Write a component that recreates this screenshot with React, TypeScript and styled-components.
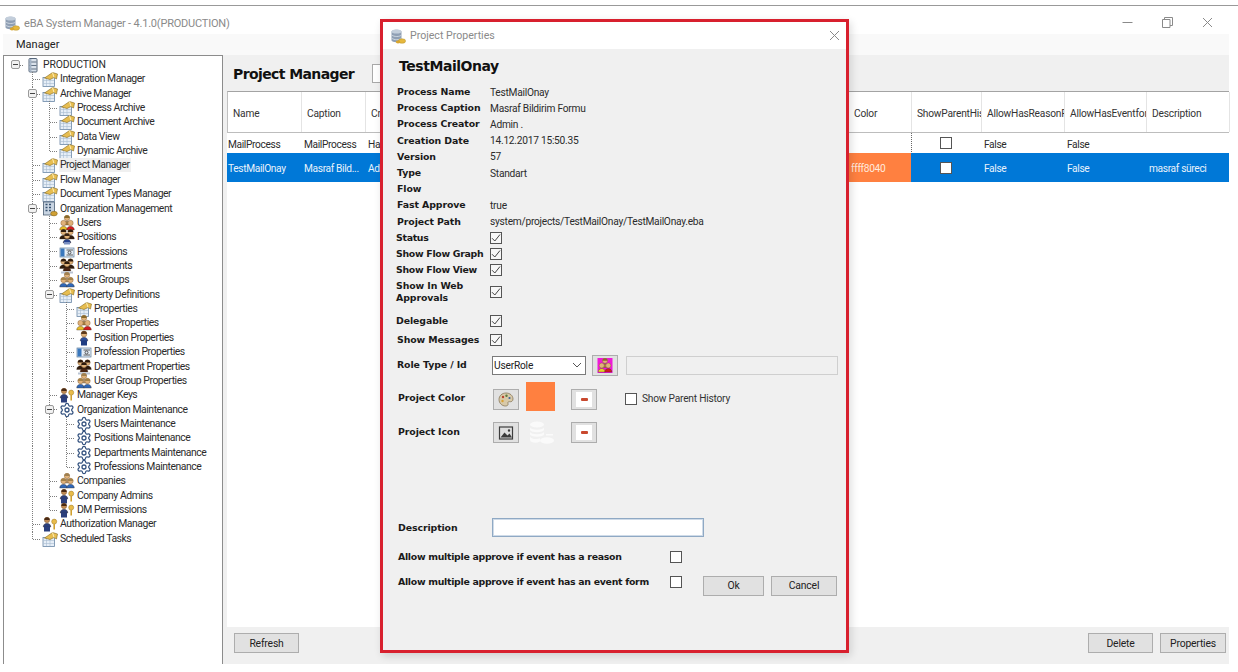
import React from "react";
import styled, { createGlobalStyle, css } from "styled-components";
import { Settings } from "lucide-react";

const Global = createGlobalStyle`
  html, body { margin: 0; padding: 0; background: #fff; }
  body { font-family: "Roboto", "Liberation Sans", sans-serif; font-size: 11px; color: #1c1c1c; -webkit-font-smoothing: antialiased; }
  * { box-sizing: border-box; }
`;

const Page = styled.div`
  position: relative; width: 1238px; height: 672px; padding-top: 5px; overflow: hidden;
  display: flex; flex-direction: column; background: #fff;
`;
const TopRule = styled.div`height: 1px; background: #999; flex: none;`;
const TitleBar = styled.div`
  height: 28px; flex: none; display: flex; align-items: center; padding: 6px 25px 0 4px; color: #8a8a8a; font-size: 11px; letter-spacing: -.2px;
`;
const TitleText = styled.span`margin-left: 4px; flex: 1;`;
const WinControls = styled.div`display: flex; gap: 29px; align-items: center; margin-top: -2px;`;
const MenuBar = styled.div`
  height: 21px; flex: none; margin: 0 9px 0 3px; background: #f9f9f9; padding: 0 0 1px 13px; display: flex; align-items: center; font-size: 11px; color: #222;
`;
const Body = styled.div`height: 609px; flex: none; display: flex; margin-right: 9px; margin-left: 3px;`;
const TreePanel = styled.div`
  width: 220px; flex: none; border: 1px solid #8c8c8c; border-bottom: none; padding: 1.8px 0 0 3px; background: #fff;
`;
const TreeRowBox = styled.div`height: 14.36px; display: flex; align-items: center; white-space: nowrap;`;
const lineV = (h: string) => `repeating-linear-gradient(to bottom, #7e7e7e 0 1px, transparent 1px 2px) 8px 0 / 1px ${h} no-repeat`;
const lineH = `repeating-linear-gradient(to right, #7e7e7e 0 1px, transparent 1px 2px) 9px 7px / 8px 1px no-repeat`;
const Guide = styled.div<{ $kind: "none" | "pipe" | "tee" | "elbow" | "stub" }>`
  width: 17px; height: 100%; flex: none; display: flex; align-items: center; justify-content: center;
  ${p => p.$kind === "pipe" && css`background: ${lineV("100%")};`}
  ${p => p.$kind === "tee" && css`background: ${lineH}, ${lineV("100%")};`}
  ${p => p.$kind === "elbow" && css`background: ${lineH}, ${lineV("50%")};`}
  ${p => p.$kind === "stub" && css`background: ${lineH};`}
`;
const Expander = styled.div`
  width: 9px; height: 9px; border: 1px solid #9a9a9a; border-radius: 2px; background: #f1f1f1; display: flex; align-items: center; justify-content: center;
  &::before { content: ""; width: 5px; height: 1px; background: #444; }
`;
const NodeIcon = styled.span`width: 16px; height: 14px; margin: 0 2px 0 1px; flex: none; display: flex; align-items: center; justify-content: center;`;
const NodeLabel = styled.span<{ $active?: boolean; $caps?: boolean }>`
  font-size: 10.4px; line-height: 14px; color: #2b2b2b; margin-left: -1px; padding: 0 1px; letter-spacing: ${p => (p.$caps ? "-.1px" : "-.45px")};
  ${p => p.$active && css`background: #f0f0f0;`}
`;
const Main = styled.div`flex: 1; min-width: 0; display: flex; flex-direction: column; background: #f0f0f0;`;
const MainHead = styled.div`height: 36px; flex: none; display: flex; align-items: center; padding-left: 10px; padding-top: 1px;`;
const Heading = styled.h1`
  margin: 0; width: 139px; font: bold 14px "DejaVu Sans", sans-serif; color: #111; letter-spacing: -.6px;
`;
const SearchBox = styled.div`width: 300px; height: 19px; background: #fff; border: 1px solid #a9a9a9;`;
const TableWrap = styled.div`flex: 1; margin-left: 4px; background: #fff; min-height: 0;`;
const cols = "74px 64px 483px 63px 70px 83px 82px 83px";
const HeaderRow = styled.div`
  height: 42px; display: grid; grid-template-columns: ${cols}; border-top: 1px solid #a3a3a3; border-bottom: 1px solid #bdbdbd; border-left: 1px solid #c0c0c0; background: #fff;
`;
const HeaderCell = styled.div`
  display: flex; align-items: center; padding: 2px 0 0 5px; border-right: 1px solid #e4e4e4; overflow: hidden; white-space: nowrap; font-size: 10.2px; letter-spacing: -.2px; color: #333;
`;
const DataRow = styled.div<{ $selected?: boolean; $h: number }>`
  height: ${p => p.$h}px; display: grid; grid-template-columns: ${cols};
  background: ${p => (p.$selected ? "#0078d7" : "#fff")}; color: ${p => (p.$selected ? "#e8f2fb" : "#2b2b2b")};
`;
const DataCell = styled.div<{ $fill?: string; $dotted?: boolean; $center?: boolean; $pad?: number }>`
  display: flex; align-items: center; padding: 2px 0 0 ${p => p.$pad ?? 3}px; overflow: hidden; white-space: nowrap; font-size: 10.2px; letter-spacing: -.35px;
  ${p => p.$center && css`justify-content: center; padding: 0;`}
  ${p => p.$fill && css`background: ${p.$fill}; color: #ffe9dc;`}
  ${p => p.$dotted && css`
    background: repeating-linear-gradient(to bottom, #666 0 1px, transparent 1px 2px) 0 0 / 1px 100% no-repeat;
  `}
`;
const Footer = styled.div`height: 37px; flex: none; display: flex; align-items: flex-start; padding: 6px 3px 0 11px; gap: 7px;`;
const Spacer = styled.div`flex: 1;`;
const ActionButton = styled.button<{ $w: number }>`
  width: ${p => p.$w}px; height: 20px; padding: 0; background: #e1e1e1; border: 1px solid #adadad; font: 10.4px "Roboto", sans-serif; letter-spacing: -.2px; color: #222; flex: none;
`;

const Dialog = styled.div`
  position: absolute; left: 380px; top: 19px; width: 469px; height: 634px; border: 3px solid #d8202e; background: #f0f0f0;
  box-shadow: 2px 3px 8px rgba(0,0,0,.14); display: flex; flex-direction: column;
`;
const DialogBar = styled.div`
  height: 27px; flex: none; background: #fff; display: flex; align-items: center; padding: 0 6px 0 7px; color: #8a8a8a; font-size: 10.6px;
`;
const DialogTitle = styled.span`flex: 1; margin-left: 4px;`;
const DialogBody = styled.div`padding: 7px 0 0 14px; display: flex; flex-direction: column;`;
const DialogHeading = styled.h2`
  margin: 0 0 0 2px; height: 28px; font: bold 14px/20px "DejaVu Sans", sans-serif; letter-spacing: -.45px; color: #111;
`;
const Row = styled.div<{ $h: number; $mt?: number; $start?: boolean }>`
  height: ${p => p.$h}px; margin-top: ${p => p.$mt ?? 0}px; flex: none; display: flex; align-items: ${p => (p.$start ? "flex-start" : "center")};
`;
const Label = styled.div<{ $inset?: number; $w?: number; $tight?: boolean; $top?: number }>`
  width: ${p => p.$w ?? 93}px; flex: none; padding-left: ${p => Math.max(0, p.$inset ?? 0)}px; margin-left: ${p => Math.min(0, p.$inset ?? 0)}px;
  margin-top: ${p => p.$top ?? 0}px;
  font: bold 9.4px/12px "DejaVu Sans", sans-serif; color: #1a1a1a; letter-spacing: ${p => (p.$tight ? "-.3px" : "-.1px")};
`;
const Value = styled.div`font-size: 10.2px; color: #2b2b2b; white-space: nowrap; letter-spacing: -.25px;`;
const Check = styled.div<{ $filled?: boolean; $ml?: number; $top?: number }>`
  width: 12px; height: 12px; flex: none; border: 1px solid #555; background: ${p => (p.$filled ? "#f7f7f7" : "#fff")};
  margin-left: ${p => p.$ml ?? 0}px; margin-top: ${p => p.$top ?? 0}px; display: flex; align-items: center; justify-content: center;
`;
const Select = styled.div`
  width: 94px; height: 19px; margin-left: 2px; border: 1px solid #7a7a7a; background: #fff; display: flex; align-items: center; justify-content: space-between; padding: 0 3px 0 1px; font-size: 10.2px; letter-spacing: -.2px; color: #222;
`;
const IconButton = styled.div<{ $ml?: number; $top?: number }>`
  width: 26px; height: 21px; margin-left: ${p => p.$ml ?? 0}px; margin-top: ${p => p.$top ?? 0}px; flex: none; background: #e1e1e1; border: 1px solid #adadad; display: flex; align-items: center; justify-content: center;
`;
const DisabledField = styled.div`width: 212px; height: 19px; margin-left: 8px; background: #f0f0f0; border: 1px solid #cfcfcf;`;
const Swatch = styled.div`width: 29px; height: 29px; margin-left: 7px; background: #ff8040; flex: none;`;
const IconSlot = styled.div`width: 29px; height: 21px; margin-left: 7px; flex: none; display: flex; align-items: center; justify-content: center;`;
const MinusFace = styled.div`
  width: 16px; height: 15px; background: #fff; display: flex; align-items: center; justify-content: center;
  &::before { content: ""; width: 7px; height: 3px; background: #c9492f; border-radius: 1px; }
`;
const InlineLabel = styled.span`margin: 10.6px 0 0 5px; font-size: 10.2px; line-height: 12px; letter-spacing: -.22px; color: #333;`;
const TextField = styled.div`width: 212px; height: 19px; margin-left: 2px; background: #fff; border: 1px solid #8fa9c4; box-shadow: inset 0 0 0 1px #cfdbe8;`;
const Grow = styled.div`flex: none; display: flex; gap: 7px; margin-left: 21px;`;

/* ---------- drawings ---------- */
const Svg: React.FC<{ children: React.ReactNode; s?: number }> = ({ children, s = 16 }) => (
  <svg width={s} height={s} viewBox="0 0 16 16" aria-hidden="true">{children}</svg>
);
const Roof = () => (
  <Svg>
    <rect x="1" y="6.500" width="11.500" height="9" fill="#e6eef7" stroke="#6a87a6" strokeWidth=".8" />
    <path d="M1.500 9.500h10.500M1.500 12.500h10.500M4.500 7v8M8 7v8" stroke="#a8bcd0" strokeWidth=".6" />
    <path d="M2.500 7 10.500 1.500 15.500 3 14.500 8 12 6.500 8 8.500z" fill="#e7bd50" stroke="#85691f" strokeWidth=".6" />
    <path d="M10.500 1.500 12 6.500" stroke="#fff4c6" strokeWidth=".9" />
  </Svg>
);
const Person = ({ x, y, body, head = "#e0b27a", r = 2.7, hair }: { x: number; y: number; body: string; head?: string; r?: number; hair?: string }) => (
  <g>
    <path d={`M${x - 3.8} ${y + 8} C${x - 3.8} ${y + 3} ${x + 3.8} ${y + 3} ${x + 3.8} ${y + 8}Z`} fill={body} stroke="#3a2a18" strokeWidth=".35" />
    <circle cx={x} cy={y + 1} r={r} fill={head} stroke="#7a5228" strokeWidth=".4" />
    {hair && <path d={`M${x - r} ${y + 1}a${r} ${r} 0 0 1 ${2 * r} 0z`} fill={hair} />}
  </g>
);
const Users = () => (
  <Svg>
    <Person x={8} y={2} body="#a9823f" hair="#8a6a2a" />
    <Person x={4.500} y={7} body="#e6bb2a" />
    <Person x={11.500} y={7} body="#d01c20" />
  </Svg>
);
const Groups = () => (
  <Svg>
    <Person x={8} y={2} body="#b99a70" hair="#a08050" />
    <Person x={4.500} y={7} body="#2f67b8" hair="#a58248" />
    <Person x={11.500} y={7} body="#2f67b8" hair="#a58248" />
  </Svg>
);
const Depts = () => (
  <Svg>
    <Person x={4.500} y={2.500} body="#2e1a0d" hair="#2e1a0d" />
    <Person x={11.500} y={2.500} body="#2e1a0d" hair="#2e1a0d" />
    <Person x={8} y={5} body="#4a2413" hair="#2e1a0d" />
    <rect x="2" y="13.500" width="12" height="2" fill="#b9c4d4" />
  </Svg>
);
const Positions = () => (
  <Svg>
    <Person x={4.500} y={2} body="#2e1a0d" hair="#2e1a0d" />
    <Person x={11.500} y={2} body="#2e1a0d" hair="#2e1a0d" />
    <Person x={8} y={6} body="#24408e" hair="#3a2212" />
    <rect x="5" y="13" width="6" height="2.500" fill="#7a8fc0" />
  </Svg>
);
const SinglePerson = () => (
  <Svg><Person x={8} y={3} body="#2b4e9c" r={2.900} hair="#5c3a1c" /><rect x="5" y="10.500" width="6" height="5" fill="#1f3d82" /></Svg>
);
const IdCard = () => (
  <Svg>
    <rect x="1" y="4" width="14" height="9" fill="#e4edf6" stroke="#5d7b99" strokeWidth=".7" />
    <rect x="1.500" y="4.500" width="4" height="8" fill="#3a78bd" />
    <path d="M7.500 6h6.500M7.500 11h6.500" stroke="#3a3a3a" strokeWidth=".8" />
    <circle cx="10.500" cy="8.500" r="1.500" fill="none" stroke="#333" strokeWidth=".8" />
  </Svg>
);
const KeyPerson = () => (
  <Svg>
    <Person x={5} y={3} body="#2b3f7c" head="#c08a52" r={2.700} hair="#4a2a14" />
    <rect x="2" y="10.500" width="6" height="5" fill="#2b3f7c" />
    <circle cx="12.200" cy="5.600" r="2.500" fill="#e9bc4a" stroke="#9a7420" strokeWidth=".5" />
    <path d="M12.200 8v5.500" stroke="#d0a030" strokeWidth="1.600" />
  </Svg>
);
const Gear = () => <Settings size={16} color="#34527f" strokeWidth={1.9} />;
const Server = () => (
  <Svg>
    <rect x="4" y="1.500" width="8" height="13.500" rx="1" fill="#d9e1ea" stroke="#56667a" />
    <path d="M4.500 5h7M4.500 8.500h7M4.500 12h7" stroke="#56667a" strokeWidth=".9" />
    <rect x="4.600" y="2" width="1.800" height="12.500" fill="#a5b5c7" />
  </Svg>
);
const Building = () => (
  <Svg>
    <rect x="1.500" y="1" width="11" height="13" fill="#c8d4e2" stroke="#4d5f74" strokeWidth=".8" />
    <path d="M3.500 3.500h2M7 3.500h2M3.500 6.500h2M7 6.500h2M3.500 9.500h2M7 9.500h2" stroke="#34506f" strokeWidth="1.400" />
    <ellipse cx="12" cy="12.600" rx="3.300" ry="2.300" fill="#cfa035" stroke="#7b5d18" strokeWidth=".5" />
  </Svg>
);
const AppLogo = () => (
  <Svg>
    <path d="M1.500 3.500C3 1 10 1 11.500 3.500V12C10 14.500 3 15 1.500 12.500z" fill="#8f9fb4" />
    <ellipse cx="6.500" cy="3.500" rx="5" ry="2" fill="#c3cedb" />
    <path d="M1.800 7c2 2 8 2 9.500 0M1.800 10.200c2 2 8 2 9.500 0" stroke="#dbe2ea" strokeWidth=".8" fill="none" />
    <ellipse cx="12" cy="13" rx="3.600" ry="2.300" fill="#e6b83e" stroke="#a8851f" strokeWidth=".4" />
    <ellipse cx="8" cy="14" rx="2.200" ry="1.400" fill="#d9a62e" />
  </Svg>
);
const Palette = () => (
  <Svg>
    <path d="M8 2c4 0 7 2.600 7 6 0 2.400-2 3-3.400 2.700-1.400-.3-2 .6-1.600 1.800.5 1.500-.8 2.500-2.500 2.500C3.800 15 1 12 1 8.500 1 4.800 4 2 8 2z" fill="#d8c9a8" stroke="#7d6b4a" strokeWidth=".7" />
    <circle cx="5" cy="6" r="1.200" fill="#b8432f" />
    <circle cx="8.500" cy="4.800" r="1.200" fill="#5b7a3c" />
    <circle cx="11.500" cy="7" r="1.100" fill="#3e6396" />
    <circle cx="4.500" cy="10" r="1.200" fill="#d8a032" />
  </Svg>
);
const ImageGlyph = () => (
  <Svg>
    <rect x="1.500" y="2" width="13" height="12" fill="#dedede" stroke="#3d3d3d" strokeWidth="1.200" />
    <path d="M2.500 12.500 6.500 7.500l3 3 2-2 2.500 4z" fill="#3b3b3b" />
    <circle cx="11" cy="5.500" r="1.200" fill="#3b3b3b" />
  </Svg>
);
const RoleGlyph = () => (
  <svg width="16" height="15" viewBox="0 0 16 16" aria-hidden="true">
    <rect width="16" height="16" fill="#f018d8" />
    <Person x={8} y={2} body="#a9823f" hair="#8a6a2a" />
    <Person x={4.500} y={7} body="#e6d22a" />
    <Person x={11.500} y={7} body="#d01c20" />
  </svg>
);
const Coins = () => (
  <svg width="26" height="24" viewBox="0 0 26 24" aria-hidden="true" fill="#fafafa">
    <ellipse cx="9" cy="3.500" rx="7" ry="3" />
    <path d="M2 6.500c1.500 3 12.500 3 14 0v2.500c-1.500 3-12.500 3-14 0zM2 11c1.500 3 12.500 3 14 0v2.500c-1.500 3-12.500 3-14 0zM2 15.500c1.500 3 8 3.200 10 1.500v3.500C8 22.500 3 22 2 19z" />
    <ellipse cx="19" cy="19.500" rx="7" ry="3.300" />
    <path d="M18 13h7v1.500h-7z" />
  </svg>
);
const Tick = () => (
  <svg width="10" height="10" viewBox="0 0 10 10" aria-hidden="true">
    <path d="M1 5.200 3.800 8 9 1.500" fill="none" stroke="#444" strokeWidth="1" />
  </svg>
);
const Chevron = () => (
  <svg width="10" height="7" viewBox="0 0 10 7" aria-hidden="true"><path d="M1 1l4 4 4-4" fill="none" stroke="#555" strokeWidth="1" /></svg>
);
const CloseX = ({ c = "#8a8a8a" }: { c?: string }) => (
  <svg width="11" height="11" viewBox="0 0 11 11" aria-hidden="true"><path d="M1 1l9 9M10 1l-9 9" stroke={c} strokeWidth="1" /></svg>
);
const MinimizeGlyph = () => (
  <svg width="11" height="11" viewBox="0 0 11 11" aria-hidden="true"><path d="M.5 5.500h10" stroke="#8a8a8a" /></svg>
);
const RestoreGlyph = () => (
  <svg width="11" height="11" viewBox="0 0 11 11" aria-hidden="true" fill="none" stroke="#8a8a8a"><path d="M.5 2.500h7.500v8H.5zM2.500 2.500v-2h8v8H8" /></svg>
);

/* ---------- data ---------- */
type Node = { label: string; icon: React.ReactNode; active?: boolean; children?: Node[] };
const tree: Node = {
  label: "PRODUCTION", icon: <Server />, children: [
    { label: "Integration Manager", icon: <Roof /> },
    { label: "Archive Manager", icon: <Roof />, children: [
      { label: "Process Archive", icon: <Roof /> },
      { label: "Document Archive", icon: <Roof /> },
      { label: "Data View", icon: <Roof /> },
      { label: "Dynamic Archive", icon: <Roof /> },
    ] },
    { label: "Project Manager", icon: <Roof />, active: true },
    { label: "Flow Manager", icon: <Roof /> },
    { label: "Document Types Manager", icon: <Roof /> },
    { label: "Organization Management", icon: <Building />, children: [
      { label: "Users", icon: <Users /> },
      { label: "Positions", icon: <Positions /> },
      { label: "Professions", icon: <IdCard /> },
      { label: "Departments", icon: <Depts /> },
      { label: "User Groups", icon: <Groups /> },
      { label: "Property Definitions", icon: <Roof />, children: [
        { label: "Properties", icon: <Roof /> },
        { label: "User Properties", icon: <Users /> },
        { label: "Position Properties", icon: <SinglePerson /> },
        { label: "Profession Properties", icon: <IdCard /> },
        { label: "Department Properties", icon: <Depts /> },
        { label: "User Group Properties", icon: <Groups /> },
      ] },
      { label: "Manager Keys", icon: <KeyPerson /> },
      { label: "Organization Maintenance", icon: <Gear />, children: [
        { label: "Users Maintenance", icon: <Gear /> },
        { label: "Positions Maintenance", icon: <Gear /> },
        { label: "Departments Maintenance", icon: <Gear /> },
        { label: "Professions Maintenance", icon: <Gear /> },
      ] },
      { label: "Companies", icon: <Groups /> },
      { label: "Company Admins", icon: <KeyPerson /> },
      { label: "DM Permissions", icon: <KeyPerson /> },
    ] },
    { label: "Authorization Manager", icon: <KeyPerson /> },
    { label: "Scheduled Tasks", icon: <Roof /> },
  ],
};

const renderTree = (n: Node, trail: boolean[], last: boolean, isRoot: boolean): React.ReactNode[] => {
  const hasKids = !!n.children?.length;
  const row = (
    <TreeRowBox key={n.label}>
      {trail.map((more, i) => <Guide key={i} $kind={more ? "pipe" : "none"} />)}
      <Guide $kind={isRoot ? "stub" : last ? "elbow" : "tee"}>{hasKids && <Expander />}</Guide>
      <NodeIcon>{n.icon}</NodeIcon>
      <NodeLabel $active={n.active} $caps={isRoot}>{n.label}</NodeLabel>
    </TreeRowBox>
  );
  const nextTrail = isRoot ? [] : [...trail, !last];
  const kids = (n.children ?? []).flatMap((c, i, a) => {
    const t = isRoot ? [false] : nextTrail;
    return renderTree(c, t, i === a.length - 1, false);
  });
  return [row, ...kids];
};

const headers = ["Name", "Caption", "Creator", "Color", "ShowParentHistory", "AllowHasReasonForm", "AllowHasEventform", "Description"];

const infoRows: [string, string][] = [
  ["Process Name", "TestMailOnay"],
  ["Process Caption", "Masraf Bildirim Formu"],
  ["Process Creator", "Admin ."],
  ["Creation Date", "14.12.2017 15:50.35"],
  ["Version", "57"],
  ["Type", "Standart"],
  ["Flow", ""],
  ["Fast Approve", "true"],
  ["Project Path", "system/projects/TestMailOnay/TestMailOnay.eba"],
];

export default function App() {
  return (
    <Page>
      <Global />
      <TopRule />
      <TitleBar>
        <AppLogo />
        <TitleText>eBA System Manager - 4.1.0(PRODUCTION)</TitleText>
        <WinControls>
          <MinimizeGlyph />
          <RestoreGlyph />
          <CloseX />
        </WinControls>
      </TitleBar>
      <MenuBar>Manager</MenuBar>
      <Body>
        <TreePanel>{renderTree(tree, [], true, true)}</TreePanel>
        <Main>
          <MainHead>
            <Heading>Project Manager</Heading>
            <SearchBox />
          </MainHead>
          <TableWrap>
            <HeaderRow>
              {headers.map(h => <HeaderCell key={h}>{h}</HeaderCell>)}
            </HeaderRow>
            <DataRow $h={20}>
              <DataCell $pad={1}>MailProcess</DataCell>
              <DataCell>MailProcess</DataCell>
              <DataCell>Hakan</DataCell>
              <DataCell />
              <DataCell $center $dotted><Check /></DataCell>
              <DataCell>False</DataCell>
              <DataCell>False</DataCell>
              <DataCell />
            </DataRow>
            <DataRow $h={29} $selected>
              <DataCell $pad={1}>TestMailOnay</DataCell>
              <DataCell>Masraf Bild...</DataCell>
              <DataCell>Admin .</DataCell>
              <DataCell $fill="#ff8040">ffff8040</DataCell>
              <DataCell $center><Check /></DataCell>
              <DataCell>False</DataCell>
              <DataCell>False</DataCell>
              <DataCell>masraf süreci</DataCell>
            </DataRow>
          </TableWrap>
          <Footer>
            <ActionButton $w={65}>Refresh</ActionButton>
            <Spacer />
            <ActionButton $w={65}>Delete</ActionButton>
            <ActionButton $w={66}>Properties</ActionButton>
          </Footer>
        </Main>
      </Body>

      <Dialog>
        <DialogBar>
          <AppLogo />
          <DialogTitle>Project Properties</DialogTitle>
          <CloseX />
        </DialogBar>
        <DialogBody>
          <DialogHeading>TestMailOnay</DialogHeading>
          {infoRows.map(([k, v]) => (
            <Row $h={16.2} key={k}>
              <Label>{k}</Label>
              <Value>{v}</Value>
            </Row>
          ))}
          {["Status", "Show Flow Graph", "Show Flow View"].map(k => (
            <Row $h={16.2} key={k}>
              <Label $inset={-1} $w={94} $tight>{k}</Label>
              <Check $filled><Tick /></Check>
            </Row>
          ))}
          <Row $h={28}>
            <Label $inset={-1} $w={94}>Show In Web<br />Approvals</Label>
            <Check $filled><Tick /></Check>
          </Row>
          <Row $h={16} $mt={7}>
            <Label $inset={-1} $w={94}>Delegable</Label>
            <Check $filled><Tick /></Check>
          </Row>
          <Row $h={16} $mt={3}>
            <Label>Show Messages</Label>
            <Check $filled><Tick /></Check>
          </Row>
          <Row $h={21} $mt={7}>
            <Label $top={-2}>Role Type / Id</Label>
            <Select>UserRole<Chevron /></Select>
            <IconButton $ml={6}><RoleGlyph /></IconButton>
            <DisabledField />
          </Row>
          <Row $h={29} $mt={6} $start>
            <Label $inset={1} $top={9.6}>Project Color</Label>
            <IconButton $ml={3} $top={6.6}><Palette /></IconButton>
            <Swatch />
            <IconButton $ml={16} $top={6.6}><MinusFace /></IconButton>
            <Check $ml={28} $top={10.6} />
            <InlineLabel>Show Parent History</InlineLabel>
          </Row>
          <Row $h={21} $mt={11}>
            <Label $inset={1} $top={-2}>Project Icon</Label>
            <IconButton $ml={3}><ImageGlyph /></IconButton>
            <IconSlot><Coins /></IconSlot>
            <IconButton $ml={16}><MinusFace /></IconButton>
          </Row>
          <Row $h={19} $mt={75}>
            <Label $inset={1}>Description</Label>
            <TextField />
          </Row>
          <Row $h={16} $mt={12}>
            <Label $inset={1} $w={273} $tight>Allow multiple approve if event has a reason</Label>
            <Check />
          </Row>
          <Row $h={20} $mt={10.6} $start>
            <Label $inset={1} $w={273} $tight>Allow multiple approve if event has an event form</Label>
            <Check />
            <Grow>
              <ActionButton $w={61}>Ok</ActionButton>
              <ActionButton $w={66}>Cancel</ActionButton>
            </Grow>
          </Row>
        </DialogBody>
      </Dialog>
    </Page>
  );
}
